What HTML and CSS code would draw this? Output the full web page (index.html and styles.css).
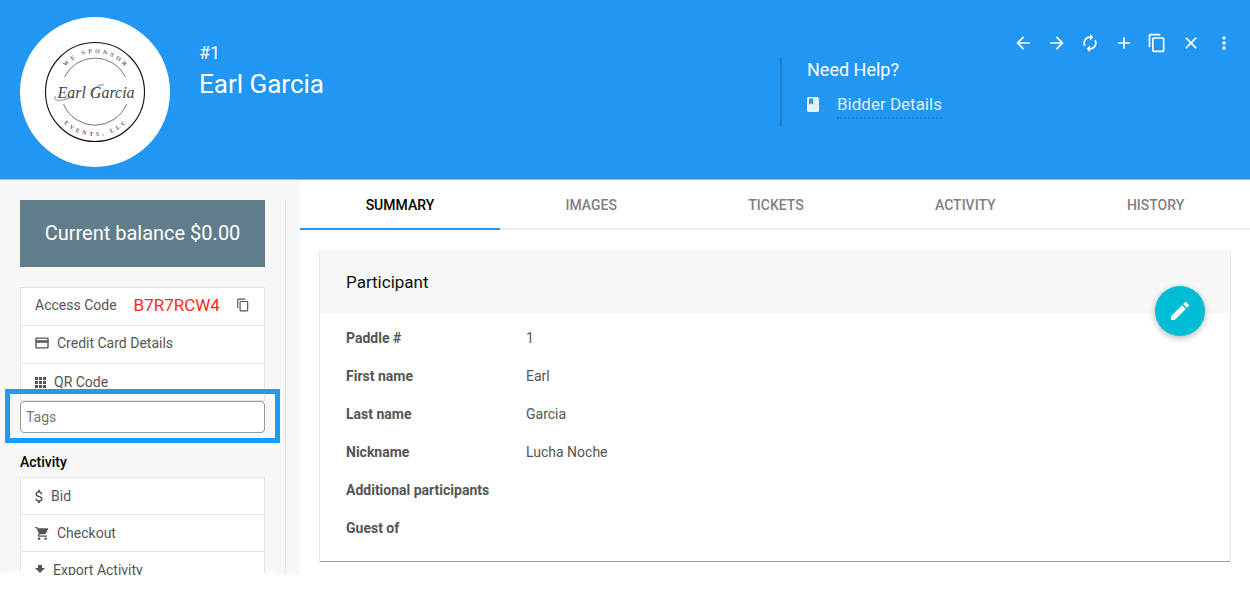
FILE: index.html
```html
<!DOCTYPE html>
<html lang="en">
    <head>
        <title>Earl Garcia</title>
        <meta charset="UTF-8">
        <meta name="viewport" content="width=device-width, initial-scale=1.0">
        <link rel="stylesheet" href="styles.css">
    </head>
    <body>
        <header class="header">
            <div class="avatar">
                <svg viewBox="0 0 150 150" width="150" height="150">
                    <defs>
                        <path id="arcTop" d="M36 75 a39 39 0 0 1 78 0"/>
                        <path id="arcBottom" d="M31 75 a44 44 0 0 0 88 0"/>
                    </defs>
                    <circle cx="75" cy="75" r="49.500" fill="none" stroke="#111" stroke-width="1.100"/>
                    <path d="M44.500 60 a34 34 0 0 1 61 0 M43.500 87 a34 34 0 0 0 63 0" fill="none" stroke="#555" stroke-width=".8"/>
                    <text class="logo-ring"><textPath href="#arcTop" startOffset="50%">W&#160;&#160;E&#160;&#160;&#160;&#160;&#160;S&#160;&#160;P&#160;&#160;O&#160;&#160;N&#160;&#160;S&#160;&#160;O&#160;&#160;R</textPath></text>
                    <text class="logo-ring"><textPath href="#arcBottom" startOffset="50%">E&#160;&#160;V&#160;&#160;E&#160;&#160;N&#160;&#160;T&#160;&#160;S&#160;&#160;,&#160;&#160;&#160;&#160;&#160;L&#160;&#160;L&#160;&#160;C</textPath></text>
                    <path d="M36 79c-5 5 5 6 16 1 M73 82c-3-6 4-16 11-14" fill="none" stroke="#555" stroke-width=".7"/>
                    <text class="logo-name" x="76" y="81">Earl Garcia</text>
                </svg>
            </div>
            <div class="title">
                <div class="number">#1</div>
                <h1>Earl Garcia</h1>
            </div>
            <div class="help">
                <div class="help-title">Need Help?</div>
                <div class="help-row">
                    <svg viewBox="0 0 12 15" width="12" height="15"><path fill="#e3f2fd" fill-rule="evenodd" d="M1.500 0h9A1.500 1.500 0 0 1 12 1.500v12a1.500 1.500 0 0 1-1.500 1.500h-9A1.500 1.500 0 0 1 0 13.500v-12A1.500 1.500 0 0 1 1.500 0zM2 1.500v6l2-1.300 2 1.300v-6z"/></svg>
                    <a href="#">Bidder Details</a>
                </div>
            </div>
            <div class="toolbar">
                <button type="button" aria-label="Previous"><svg viewBox="0 0 24 24" width="20" height="20"><path d="M20 11H7.830l5.590-5.590L12 4l-8 8 8 8 1.410-1.410L7.830 13H20z"/></svg></button>
                <button type="button" aria-label="Next"><svg viewBox="0 0 24 24" width="20" height="20"><path d="M12 4l-1.410 1.410L16.170 11H4v2h12.170l-5.580 5.590L12 20l8-8z"/></svg></button>
                <button type="button" aria-label="Refresh"><svg viewBox="0 0 24 24" width="20" height="20"><path d="M12 6v3l4-4-4-4v3a8 8 0 0 0-6.760 12.260L6.700 14.800A6 6 0 0 1 12 6zm6.760 1.740L17.300 9.200A6 6 0 0 1 12 18v-3l-4 4 4 4v-3a8 8 0 0 0 6.760-12.260z"/></svg></button>
                <button type="button" aria-label="Add"><svg viewBox="0 0 24 24" width="20" height="20"><path d="M19 13h-6v6h-2v-6H5v-2h6V5h2v6h6z"/></svg></button>
                <button type="button" aria-label="Copy"><svg viewBox="0 0 24 24" width="20" height="20"><path d="M16 1H4a2 2 0 0 0-2 2v14h2V3h12zm3 4H8a2 2 0 0 0-2 2v14a2 2 0 0 0 2 2h11a2 2 0 0 0 2-2V7a2 2 0 0 0-2-2zm0 16H8V7h11z"/></svg></button>
                <button type="button" aria-label="Close"><svg viewBox="0 0 24 24" width="20" height="20"><path d="M19 6.410L17.590 5 12 10.590 6.410 5 5 6.410 10.590 12 5 17.590 6.410 19 12 13.410 17.590 19 19 17.590 13.410 12z"/></svg></button>
                <button type="button" aria-label="More"><svg viewBox="0 0 24 24" width="20" height="20"><circle cx="12" cy="6" r="2"/><circle cx="12" cy="12" r="2"/><circle cx="12" cy="18" r="2"/></svg></button>
            </div>
        </header>

        <div class="content">
            <aside class="sidebar">
                <div class="sidebar-inner">
                    <div class="balance">Current balance $0.00</div>
                    <ul class="list codes">
                        <li>
                            <span>Access Code</span>
                            <span class="code">B7R7RCW4</span>
                            <button type="button" class="copy" aria-label="Copy access code"><svg viewBox="0 0 24 24" width="14" height="14"><path d="M16 1H4a2 2 0 0 0-2 2v14h2V3h12zm3 4H8a2 2 0 0 0-2 2v14a2 2 0 0 0 2 2h11a2 2 0 0 0 2-2V7a2 2 0 0 0-2-2zm0 16H8V7h11z"/></svg></button>
                        </li>
                        <li><a href="#"><svg viewBox="0 0 14 12" width="14" height="12"><path fill-rule="evenodd" d="M1.500.5h11a1.200 1.200 0 0 1 1.200 1.200v8.600a1.200 1.200 0 0 1-1.200 1.200h-11A1.200 1.200 0 0 1 .3 10.300V1.700A1.200 1.200 0 0 1 1.500.5zm.2 1.300v1.500h10.600V1.800zm0 4v4.400h10.600V5.800z"/></svg>Credit Card Details</a></li>
                        <li class="qr"><a href="#"><svg viewBox="0 0 11 11" width="11" height="11"><path d="M0 0h3v3H0zM4 0h3v3H4zM8 0h3v3H8zM0 4h3v3H0zM4 4h3v3H4zM8 4h3v3H8zM0 8h3v3H0zM4 8h3v3H4zM8 8h3v3H8z"/></svg>QR Code</a></li>
                    </ul>
                    <div class="tags">
                        <input type="text" placeholder="Tags" aria-label="Tags">
                    </div>
                    <h2>Activity</h2>
                    <ul class="list">
                        <li><a href="#"><svg viewBox="6 3 11 18" width="8" height="13"><path d="M11.800 10.900c-2.270-.59-3-1.200-3-2.150 0-1.090 1.010-1.850 2.700-1.850 1.780 0 2.440.85 2.500 2.100h2.210c-.07-1.720-1.120-3.300-3.210-3.810V3h-3v2.160c-1.940.42-3.500 1.680-3.500 3.610 0 2.310 1.910 3.460 4.700 4.130 2.500.6 3 1.480 3 2.410 0 .69-.49 1.790-2.700 1.790-2.060 0-2.870-.92-2.980-2.100h-2.200c.12 2.190 1.760 3.420 3.680 3.830V21h3v-2.150c1.950-.37 3.500-1.500 3.500-3.550 0-2.840-2.430-3.810-4.700-4.400z"/></svg>Bid</a></li>
                        <li><a href="#"><svg viewBox="1 2 21 20" width="14" height="13"><path d="M7 18a2 2 0 1 0 0 4 2 2 0 0 0 0-4zM1 2v2h2l3.600 7.590-1.350 2.450C4.520 15.370 5.480 17 7 17h12v-2H7.420a.25.25 0 0 1-.22-.37L8.100 13h7.450c.75 0 1.410-.41 1.750-1.030l3.580-6.490A1 1 0 0 0 20 4H5.210l-.94-2zm16 16a2 2 0 1 0 0 4 2 2 0 0 0 0-4z"/></svg>Checkout</a></li>
                        <li class="cut"><a href="#"><svg viewBox="0 0 10 13" width="10" height="13"><path d="M3 1h4v3h3L5 9 0 4h3zM0 11h10v1.500H0z"/></svg>Export Activity</a></li>
                    </ul>
                </div>
                <svg class="torn" viewBox="0 0 300 6" width="300" height="6"><path fill="#fff" d="M0 4L4 5 8 3 11 5 15 4 20 1 22 6H263L266 2 270 2 275 5 285 6 290 4 295 5 300 5V6H0z"/></svg>
            </aside>

            <main class="main">
                <nav class="tabs">
                    <a href="#" class="active">SUMMARY</a>
                    <a href="#">IMAGES</a>
                    <a href="#">TICKETS</a>
                    <a href="#">ACTIVITY</a>
                    <a href="#">HISTORY</a>
                </nav>
                <section class="card">
                    <h3>Participant</h3>
                    <button type="button" class="edit" aria-label="Edit"><svg viewBox="0 0 24 24" width="24" height="24"><path d="M3 17.250V21h3.750L17.810 9.940l-3.750-3.750zM20.710 7.040a1 1 0 0 0 0-1.410l-2.340-2.340a1 1 0 0 0-1.410 0l-1.830 1.830 3.750 3.750z"/></svg></button>
                    <table>
                        <tr><th scope="row">Paddle #</th><td>1</td></tr>
                        <tr><th scope="row">First name</th><td>Earl</td></tr>
                        <tr><th scope="row">Last name</th><td>Garcia</td></tr>
                        <tr><th scope="row">Nickname</th><td>Lucha Noche</td></tr>
                        <tr><th scope="row">Additional participants</th><td></td></tr>
                        <tr><th scope="row">Guest of</th><td></td></tr>
                    </table>
                </section>
            </main>
        </div>
    </body>
</html>
```
FILE: styles.css
```css
* {
    box-sizing: border-box;
}
body {
    margin: 0;
    background: #fff;
    color: #555;
    font-family: Roboto, "Liberation Sans", sans-serif;
    font-size: 14px;
    line-height: 20px;
}
a {
    color: inherit;
    text-decoration: none;
}
button {
    padding: 0;
    border: none;
    background: none;
    cursor: pointer;
}
svg {
    display: block;
    flex: none;
}

/* header */
.header {
    display: flex;
    align-items: flex-start;
    height: 180px;
    padding: 17px 14px 0 20px;
    background: #2196f3;
    border-bottom: 1px solid #a9bccb;
    color: #fff;
}
.avatar {
    width: 150px;
    height: 150px;
    border-radius: 50%;
    background: #fff;
}
.logo-ring {
    font-family: "Liberation Serif", serif;
    font-size: 6px;
    font-weight: bold;
    fill: #8a5a50;
    text-anchor: middle;
}
.logo-name {
    font-family: "Liberation Serif", serif;
    font-size: 16px;
    font-style: italic;
    fill: #444;
    text-anchor: middle;
}
.title {
    flex: 1;
    padding: 24px 0 0 29px;
}
.number {
    font-size: 18px;
    line-height: 24px;
}
.title h1 {
    margin: 3px 0 0;
    font-size: 26px;
    font-weight: 400;
    line-height: 32px;
}
.help {
    width: 231px;
    height: 70px;
    margin-top: 40px;
    padding-left: 25px;
    border-left: 2px solid #1e82d3;
}
.help-title {
    font-size: 18px;
    line-height: 26px;
}
.help-row {
    display: flex;
    align-items: center;
    gap: 18px;
    margin-top: 8px;
}
.help-row svg {
    margin-bottom: 2px;
}
.help-row a {
    border-bottom: 2px dotted #1e82d3;
    color: #dceefd;
    font-size: 17px;
    line-height: 26px;
}
.toolbar {
    display: flex;
    justify-content: space-between;
    width: 225px;
    padding-top: 14px;
}
.toolbar button {
    display: flex;
    align-items: center;
    justify-content: center;
    width: 24px;
    height: 24px;
    fill: #fff;
}

.content {
    display: flex;
}

/* sidebar */
.sidebar {
    position: relative;
    flex: none;
    width: 300px;
    padding-top: 20px;
    background: #f7f7f7;
}
.sidebar-inner {
    width: 286px;
    padding: 0 20px;
    border-right: 1px solid #e4e4e4;
}
.balance {
    width: 245px;
    margin-bottom: 20px;
    padding: 20px 0;
    background: #607d8b;
    color: #fff;
    font-size: 20px;
    line-height: 27px;
    text-align: center;
}
.list {
    width: 245px;
    margin: 0;
    padding: 0;
    list-style: none;
    background: #fff;
    border: 1px solid #e4e4e4;
    border-bottom: none;
}
.list li {
    display: flex;
    align-items: center;
    height: 37px;
    padding: 0 14px;
    border-bottom: 1px solid #e4e4e4;
}
.list a {
    display: flex;
    align-items: center;
    gap: 8px;
}
.list svg {
    fill: #555;
}
.codes li {
    height: 38px;
    padding-bottom: 3px;
}
.codes .qr {
    height: 37px;
    padding-bottom: 0;
}
.list .code {
    margin-left: 17px;
    color: #f92a1c;
    font-size: 17px;
}
.list .copy {
    margin-left: auto;
}
.list .cut {
    align-items: flex-start;
    height: 23px;
    padding-top: 8px;
    border-bottom: none;
    overflow: hidden;
}
.tags {
    position: relative;
    width: 245px;
}
.tags:after {
    content: "";
    position: absolute;
    top: -12px;
    right: -15px;
    bottom: -10px;
    left: -15px;
    border: 5px solid #1c9cf3;
    pointer-events: none;
}
.tags input {
    display: block;
    width: 100%;
    height: 32px;
    padding: 0 5px;
    border: 1px solid #999;
    border-radius: 4px;
    background: #fff;
    font: inherit;
}
.tags input::placeholder {
    color: #757575;
}
.sidebar h2 {
    margin: 19px 0 5px;
    color: #000;
    font-size: 14px;
    font-weight: 500;
    line-height: 20px;
}
.torn {
    position: absolute;
    bottom: 0;
    left: 0;
}

/* main column */
.main {
    flex: 1;
    min-width: 0;
    padding-bottom: 13px;
}
.tabs {
    display: flex;
    height: 50px;
}
.tabs a {
    flex: 1 1 auto;
    border-bottom: 2px solid #ececec;
    color: #808080;
    font-weight: 500;
    line-height: 50px;
    text-align: center;
}
.tabs .active {
    border-color: #2196f3;
    color: #000;
}
.card {
    position: relative;
    margin: 20px 19px 0;
    border: 1px solid #e8e8e8;
    border-top: none;
    border-bottom-color: #999;
    border-radius: 2px;
}
.card h3 {
    margin: 0;
    padding: 1px 26px 0;
    background: #f7f7f7;
    color: #111;
    font-size: 17px;
    font-weight: 400;
    line-height: 62px;
}
.edit {
    position: absolute;
    top: 36px;
    right: 25px;
    display: flex;
    align-items: center;
    justify-content: center;
    width: 50px;
    height: 50px;
    border-radius: 50%;
    background: #00bcd4;
    box-shadow: 0 2px 6px rgba(0, 0, 0, .3);
    fill: #fff;
}
.card table {
    margin: 6px 26px 14px;
    border-collapse: collapse;
}
.card th,
.card td {
    height: 38px;
    padding: 0;
    text-align: left;
}
.card th {
    width: 180px;
    font-weight: 700;
}
```
